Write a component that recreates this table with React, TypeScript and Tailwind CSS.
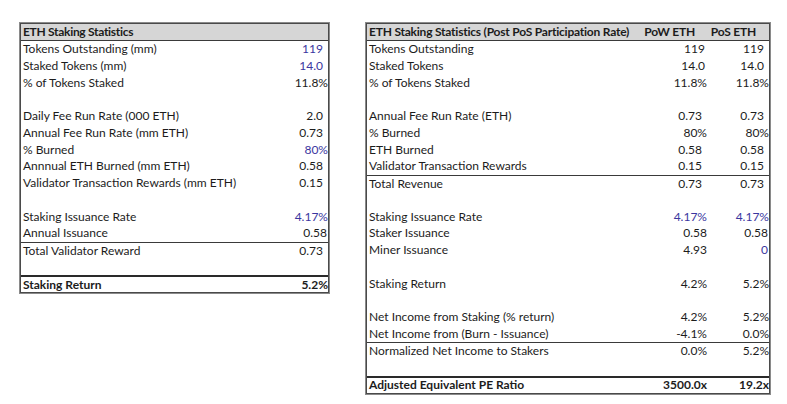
import React from "react";

type Cell = { v: string; blue?: boolean; p?: number };
type Row = { label?: string; cells?: Cell[]; bold?: boolean; top?: "thin" | "thick" };

const FONT = { fontFamily: "Lato, 'Open Sans', sans-serif" };

const leftRows: Row[] = [
  { label: "Tokens Outstanding (mm)", cells: [{ v: "119", blue: true, p: 5 }] },
  { label: "Staked Tokens (mm)", cells: [{ v: "14.0", blue: true, p: 5 }] },
  { label: "% of Tokens Staked", cells: [{ v: "11.8%", p: 0 }] },
  {},
  { label: "Daily Fee Run Rate (000 ETH)", cells: [{ v: "2.0", p: 5 }] },
  { label: "Annual Fee Run Rate (mm ETH)", cells: [{ v: "0.73", p: 5 }] },
  { label: "% Burned", cells: [{ v: "80%", blue: true, p: 0 }] },
  { label: "Annnual ETH Burned (mm ETH)", cells: [{ v: "0.58", p: 5 }] },
  { label: "Validator Transaction Rewards (mm ETH)", cells: [{ v: "0.15", p: 5 }] },
  {},
  { label: "Staking Issuance Rate", cells: [{ v: "4.17%", blue: true, p: 0 }] },
  { label: "Annual Issuance", cells: [{ v: "0.58", p: 1 }] },
  { label: "Total Validator Reward", cells: [{ v: "0.73", p: 5 }], top: "thin" },
  {},
  { label: "Staking Return", cells: [{ v: "5.2%", p: 0 }], bold: true, top: "thick" },
];

const rightRows: Row[] = [
  { label: "Tokens Outstanding", cells: [{ v: "119", p: 3 }, { v: "119", p: 5 }] },
  { label: "Staked Tokens", cells: [{ v: "14.0", p: 3 }, { v: "14.0", p: 5 }] },
  { label: "% of Tokens Staked", cells: [{ v: "11.8%", p: 1 }, { v: "11.8%", p: 0 }] },
  {},
  { label: "Annual Fee Run Rate (ETH)", cells: [{ v: "0.73", p: 6 }, { v: "0.73", p: 5 }] },
  { label: "% Burned", cells: [{ v: "80%", p: 1 }, { v: "80%", p: 0 }] },
  { label: "ETH Burned", cells: [{ v: "0.58", p: 6 }, { v: "0.58", p: 5 }] },
  { label: "Validator Transaction Rewards", cells: [{ v: "0.15", p: 6 }, { v: "0.15", p: 5 }] },
  { label: "Total Revenue", cells: [{ v: "0.73", p: 6 }, { v: "0.73", p: 5 }], top: "thin" },
  {},
  { label: "Staking Issuance Rate", cells: [{ v: "4.17%", blue: true, p: 1 }, { v: "4.17%", blue: true, p: 0 }] },
  { label: "Staker Issuance", cells: [{ v: "0.58", p: 1 }, { v: "0.58", p: 1 }] },
  { label: "Miner Issuance", cells: [{ v: "4.93", p: 1 }, { v: "0", blue: true, p: 1 }] },
  {},
  { label: "Staking Return", cells: [{ v: "4.2%", p: 1 }, { v: "5.2%", p: 0 }] },
  {},
  { label: "Net Income from Staking (% return)", cells: [{ v: "4.2%", p: 1 }, { v: "5.2%", p: 0 }] },
  { label: "Net Income from (Burn - Issuance)", cells: [{ v: "-4.1%", p: 1 }, { v: "0.0%", p: 0 }] },
  { label: "Normalized Net Income to Stakers", cells: [{ v: "0.0%", p: 1 }, { v: "5.2%", p: 0 }], top: "thin" },
  {},
  { label: "Adjusted Equivalent PE Ratio", cells: [{ v: "3500.0x", p: 1 }, { v: "19.2x", p: 0 }], bold: true, top: "thick" },
];

function TableRow({ row, widths }: { row: Row; widths: number[] }) {
  const border =
    row.top === "thin"
      ? "border-t border-[#3a3a3a]"
      : row.top === "thick"
      ? "border-t-2 border-[#2a2a2a]"
      : "";
  return (
    <div className={`flex h-[16.75px] items-center ${border} ${row.bold ? "font-bold" : ""}`}>
      <div className="flex-1 whitespace-nowrap pl-[2px]">{row.label ?? ""}</div>
      {(row.cells ?? widths.map(() => ({ v: "" } as Cell))).map((c, i) => (
        <div
          key={i}
          className={`text-right whitespace-nowrap ${c.blue ? "text-[#3a36a0]" : ""}`}
          style={{ width: widths[i], paddingRight: c.p ?? 0 }}
        >
          {c.v}
        </div>
      ))}
    </div>
  );
}

export default function App() {
  return (
    <div
      className="w-[787px] h-[404px] bg-white flex items-start pt-[23px] text-[12px] leading-[14px] text-[#1c1c1c]"
      style={FONT}
    >
      <div className="ml-[20px] w-[309px] border border-[#4a4a4a] shadow-[0_0_0_1px_#8a8a8a]">
        <div className="flex h-[16.75px] items-center bg-[#d6d6d6] border-b border-[#3a3a3a] font-bold tracking-[-0.3px] pl-[2px]">
          ETH Staking Statistics
        </div>
        {leftRows.map((r, i) => (
          <TableRow key={i} row={r} widths={[80]} />
        ))}
      </div>

      <div className="ml-[37px] w-[404px] border border-[#4a4a4a] shadow-[0_0_0_1px_#8a8a8a]">
        <div className="flex h-[16.75px] items-center bg-[#d6d6d6] border-b border-[#3a3a3a] font-bold">
          <div className="flex-1 pl-[2px] whitespace-nowrap tracking-[-0.22px]">ETH Staking Statistics (Post PoS Participation Rate)</div>
          <div className="w-[70px] text-right pr-[14px] whitespace-nowrap tracking-[-0.2px]">PoW ETH</div>
          <div className="w-[60px] text-right pr-[13px] whitespace-nowrap tracking-[-0.2px]">PoS ETH</div>
        </div>
        {rightRows.map((r, i) => (
          <TableRow key={i} row={r} widths={[71, 61]} />
        ))}
      </div>
    </div>
  );
}
